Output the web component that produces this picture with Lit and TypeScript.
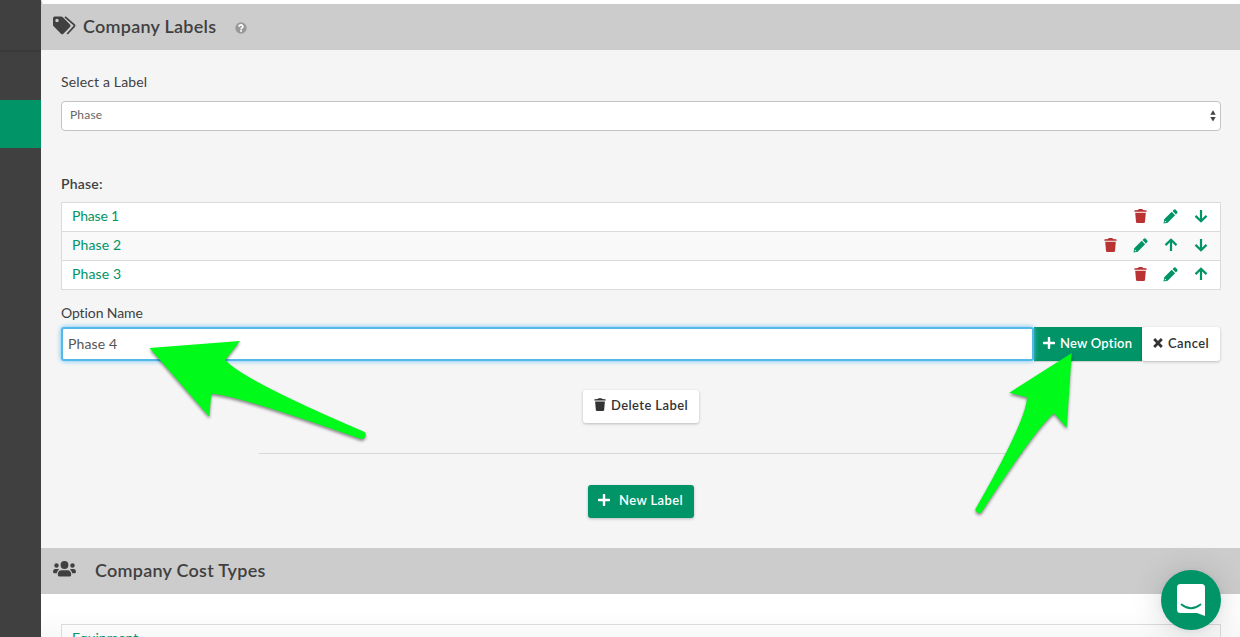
import { LitElement, html, css, svg } from "lit";
import { customElement, property } from "lit/decorators.js";

const glyphs: Record<string, { box: string; art: unknown }> = {
  tags: {
    box: "0 0 23 18",
    art: svg`<path fill-rule="evenodd" d="M1.800 0H8.200Q9 0 9.600.6L17 8Q18.200 9.200 17 10.400L10.400 17.200Q9.200 18.400 8 17.200L.6 9.800Q0 9.200 0 8.400V1.800Q0 0 1.800 0ZM4 2.300A1.700 1.700 0 1 0 4 5.700A1.700 1.700 0 1 0 4 2.300Z"/><path fill="none" stroke="currentColor" stroke-width="1.700" d="M12 .4L21 8.200Q22 9.200 21 10.200L14.200 17.500"/>`,
  },
  help: {
    box: "0 0 12 12",
    art: svg`<circle cx="6" cy="6" r="5.700"/><path d="M4.100 4.700Q4.200 2.900 6 2.900T7.900 4.600Q7.900 5.500 6.900 5.900Q6.100 6.300 6.100 7.200" fill="none" stroke="#fff" stroke-width="1.700"/><rect x="5.200" y="8" width="1.800" height="1.700" fill="#fff"/>`,
  },
  trash: {
    box: "0 0 13 15",
    art: svg`<path d="M.3 2Q.3 1.300 1 1.300L4 1Q4.300.1 5 .1H8Q8.700.1 9 1L12 1.300Q12.700 1.300 12.700 2V2.700H.3ZM1.200 3.700H11.800L11 12.800Q10.900 14 9.800 14H3.200Q2.100 14 2 12.800Z"/>`,
  },
  pencil: {
    box: "0 0 15 15",
    art: svg`<path fill-rule="evenodd" d="M.5 14.400L1.200 10.200L8.700 2.800L12.100 6.200L4.700 13.700ZM1.900 11.500L1.700 13.200L3.400 12.900Z"/><path d="M9.500 2L11.100.5Q11.800 0 12.500.6L14.300 2.400Q14.900 3.100 14.300 3.900L12.900 5.400Z"/>`,
  },
  down: {
    box: "0 0 14 14",
    art: svg`<path d="M7 1V12M1.500 6.900L7 12.200L12.500 6.900" fill="none" stroke="currentColor" stroke-width="2.200"/>`,
  },
  up: {
    box: "0 0 14 14",
    art: svg`<path d="M7 13V2M1.500 7.100L7 1.800L12.500 7.100" fill="none" stroke="currentColor" stroke-width="2.200"/>`,
  },
  plus: {
    box: "0 0 12 12",
    art: svg`<path d="M6 .9V11.100M.9 6H11.100" fill="none" stroke="currentColor" stroke-width="2.400" stroke-linecap="round"/>`,
  },
  cross: {
    box: "0 0 10 10",
    art: svg`<path d="M1.200 1L8.800 9M8.800 1L1.200 9" fill="none" stroke="currentColor" stroke-width="2.700"/>`,
  },
  people: {
    box: "0 0 23 16",
    art: svg`<circle cx="11.500" cy="4" r="3.900"/><circle cx="3.500" cy="4.500" r="2.200"/><circle cx="19.500" cy="4.500" r="2.200"/><path d="M4.800 13.700Q4.800 9.200 8.600 9.200H14.400Q18.200 9.200 18.200 13.700Q18.200 15.600 16.500 15.600H6.500Q4.800 15.600 4.800 13.700ZM.1 10.600Q.1 7.900 2.400 7.900H4.700Q5.500 7.900 6.200 8.500Q4.200 9.600 3.800 12.200H1.200Q.1 12.200.1 11ZM22.900 10.600Q22.900 7.900 20.600 7.900H18.300Q17.500 7.900 16.800 8.500Q18.800 9.600 19.200 12.200H21.800Q22.900 12.200 22.900 11Z"/>`,
  },
  updown: {
    box: "0 0 6 12",
    art: svg`<path d="M.3 4.800L3 .3L5.700 4.800ZM.3 6.900H5.700L3 11.400Z"/>`,
  },
};

@customElement("ui-icon")
class UiIcon extends LitElement {
  @property() name = "plus";
  static styles = css`
    :host { display: block; flex: none; }
    svg { display: block; width: 100%; height: 100%; fill: currentColor; }
  `;
  render() {
    const g = glyphs[this.name];
    return html`<svg viewBox=${g.box} aria-hidden="true">${g.art}</svg>`;
  }
}

const rows = [
  { name: "Phase 1", tools: ["trash", "pencil", "down"] },
  { name: "Phase 2", tools: ["trash", "pencil", "up", "down"] },
  { name: "Phase 3", tools: ["trash", "pencil", "up"] },
];

@customElement("app-root")
class AppRoot extends LitElement {
  static styles = css`
    :host {
      display: flex; position: relative; box-sizing: border-box;
      width: 100%; height: 637px; overflow: hidden;
      background: #fff; color: #404040;
      font: 14px/20px Lato, "Noto Sans", sans-serif;
    }
    * { box-sizing: border-box; }
    .side { width: 41px; flex: none; background: #404040; display: flex; flex-direction: column; }
    .side-top { height: 51px; border-bottom: 1px solid #383838; box-shadow: 0 1px 2px #3a3a3a; }
    .side-gap { height: 49px; }
    .side-active { height: 48px; background: #009467; }
    .main { flex: 1; min-width: 0; padding-top: 4px; }
    .head {
      height: 46px; background: #ccc; display: flex; align-items: center; padding-left: 12px;
      font-size: 18px; font-weight: 600;
    }
    .title { letter-spacing: .25px; white-space: nowrap; margin-top: -3px; }
    .i-tags { width: 23px; height: 19px; margin: -4px 7px 0 0; }
    .i-people { width: 23px; height: 16px; margin: -4px 19px 0 0; }
    .i-help { width: 12px; height: 12px; margin: 2px 0 0 19px; color: #999; }
    .panel { height: 498px; background: #f5f5f5; padding: 22px 19px 0 20px; display: flex; flex-direction: column; }
    .label { height: 20px; letter-spacing: .15px; }
    .select {
      height: 30px; margin-top: 9px; border: 1px solid #c4c4c4; border-radius: 4px; background: #fff;
      display: flex; align-items: center; justify-content: space-between; padding: 0 4px 2px 8px;
      font-size: 12px; color: #666; letter-spacing: .2px;
    }
    .i-updown { width: 6px; height: 12px; color: #444; margin-top: 2px; }
    .name { margin-top: 43px; height: 20px; font-weight: 600; letter-spacing: .2px; }
    .list { margin-top: 8px; border: 1px solid #dbdbdb; background: #fff; }
    .row { height: 29px; display: flex; align-items: center; justify-content: space-between; padding: 0 12.500px 2px 10px; color: #009467; }
    .row + .row { border-top: 1px solid #dbdbdb; }
    .row:first-child { height: 28px; }
    .row:nth-child(2) { background: #f9f9f9; }
    .link { letter-spacing: .15px; }
    .row:first-child .link { letter-spacing: -.2px; }
    .tools { display: flex; align-items: center; gap: 16px; }
    .t-trash { width: 13px; height: 15px; color: #b93333; }
    .t-pencil { width: 15px; height: 15px; }
    .t-up, .t-down { width: 14px; height: 14px; }
    .option { margin-top: 13px; letter-spacing: -.1px; }
    .form { display: flex; height: 34px; margin-top: 4px; }
    .field {
      flex: 1; border: 2px solid #54b9ea; border-radius: 3px; background: #fff; color: #555;
      padding: 5px 0 0 5px; box-shadow: 0 0 5px #5bc3f3; letter-spacing: .15px; position: relative;
    }
    .btn {
      display: flex; align-items: center; font-size: 13px; font-weight: 600; letter-spacing: .4px; white-space: nowrap;
      border-radius: 3px; background: #fff; color: #333; box-shadow: 0 1px 3px rgba(0,0,0,.24); padding-bottom: 2px;
    }
    .green { background: #009467; color: #fff; }
    .add { width: 108px; padding-left: 9px; border-radius: 0; box-shadow: 0 1px 1px rgba(0,0,0,.15); letter-spacing: .2px; }
    .cancel { width: 78px; padding-left: 11px; margin-right: 1px; }
    .i-plus { width: 12px; height: 12px; }
    .add .i-plus { margin-right: 5px; }
    .i-cross { width: 10px; height: 10px; margin-right: 5px; }
    .delete { align-self: center; width: 116px; height: 33px; margin-top: 29px; padding: 0 0 3px 11px; }
    .delete .t-trash { color: #333; width: 12px; height: 14px; margin-right: 5px; }
    .rule { align-self: center; width: 764px; height: 1px; margin-top: 30px; background: #d8d8d8; }
    .create { align-self: center; width: 106px; height: 33px; margin-top: 31px; padding: 0 0 3px 10px; }
    .create .i-plus { margin-right: 9px; }
    .costs { height: 43px; padding: 30px 19px 0 20px; background: linear-gradient(#fff 40%, #f8f8f8); }
    .cost-box { height: 30px; border: 1px solid #dbdbdb; padding: 3px 10px; color: #009467; letter-spacing: 0; }
    .notes { position: absolute; left: 0; top: 0; width: 1240px; height: 637px; pointer-events: none; filter: drop-shadow(0 2px 1.500px rgba(0,0,0,.45)); }
    .chat {
      position: absolute; right: 19px; bottom: 7px; width: 60px; height: 60px; border-radius: 50%;
      background: #009467; box-shadow: 0 1px 6px rgba(0,0,0,.06), 0 2px 32px rgba(0,0,0,.16);
    }
    .chat svg { display: block; width: 60px; height: 60px; }
  `;

  render() {
    return html`
      <nav class="side"><div class="side-top"></div><div class="side-gap"></div><div class="side-active"></div></nav>
      <main class="main">
        <header class="head">
          <ui-icon class="i-tags" name="tags"></ui-icon>
          <span class="title">Company Labels</span>
          <ui-icon class="i-help" name="help"></ui-icon>
        </header>
        <section class="panel">
          <div class="label">Select a Label</div>
          <div class="select"><span>Phase</span><ui-icon class="i-updown" name="updown"></ui-icon></div>
          <div class="name">Phase:</div>
          <div class="list">
            ${rows.map((r) => html`<div class="row">
              <span class="link">${r.name}</span>
              <span class="tools">${r.tools.map((t) => html`<ui-icon class="t-${t}" name=${t}></ui-icon>`)}</span>
            </div>`)}
          </div>
          <div class="label option">Option Name</div>
          <div class="form">
            <div class="field">Phase 4</div>
            <div class="btn green add"><ui-icon class="i-plus" name="plus"></ui-icon><span>New Option</span></div>
            <div class="btn cancel"><ui-icon class="i-cross" name="cross"></ui-icon><span>Cancel</span></div>
          </div>
          <div class="btn delete"><ui-icon class="t-trash" name="trash"></ui-icon><span>Delete Label</span></div>
          <div class="rule"></div>
          <div class="btn green create"><ui-icon class="i-plus" name="plus"></ui-icon><span>New Label</span></div>
        </section>
        <header class="head">
          <ui-icon class="i-people" name="people"></ui-icon>
          <span class="title">Company Cost Types</span>
        </header>
        <section class="costs"><div class="cost-box">Equipment</div></section>
      </main>
      <svg class="notes" viewBox="0 0 1240 637" fill="#00fa1a">
        <path d="M149.500 348L240 341L225.300 360Q243 380 363 431.300A3.900 3.900 0 0 1 360.500 438.800Q237 395 211.300 393.700L209.300 416.700Z"/>
        <path d="M1071.700 353L1009.300 392.700L1027 397.300Q1027 419 975.300 509.300A3.700 3.700 0 0 0 982 511.500Q1037 427 1054 413.300L1066.700 427.700Z"/>
      </svg>
      <div class="chat">
        <svg viewBox="0 0 60 60">
          <path fill="#fff" d="M19.500 14H40.500Q44 14 44 17.500V46L36 43H19.500Q16 43 16 39.500V17.500Q16 14 19.500 14Z"/>
          <path d="M20.500 34.500Q30 42 39.500 34.500" fill="none" stroke="#009467" stroke-width="1.800" stroke-linecap="round"/>
        </svg>
      </div>`;
  }
}
